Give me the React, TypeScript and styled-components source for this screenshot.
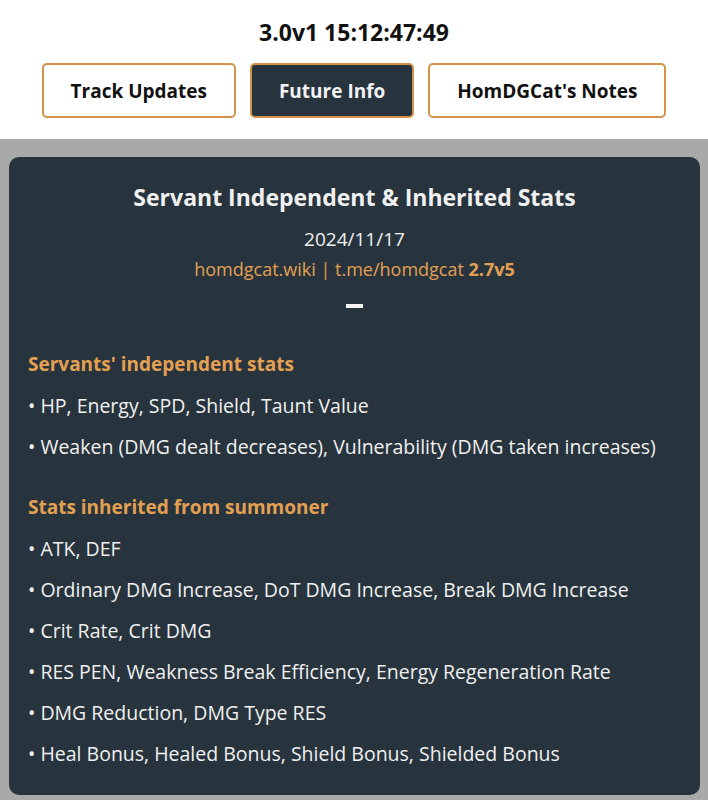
import { createGlobalStyle, styled } from 'styled-components';

const GlobalStyle = createGlobalStyle`
  html, body {
    margin: 0;
    padding: 0;
    background: #ffffff;
    font-family: "Open Sans", "Noto Sans", sans-serif;
  }
`

const Header = styled.header`
  background: #ffffff;
  padding: 16px 0 21px;
  display: flex;
  flex-direction: column;
  align-items: center;
`

const Clock = styled.h1`
  margin: 0;
  font-size: 23px;
  line-height: 32px;
  font-weight: 700;
  color: #111;
`

const Nav = styled.nav`
  margin-top: 15px;
  display: flex;
  gap: 14px;
`

const NavButton = styled.button<{ $active?: boolean }>`
  height: 55px;
  padding: 0 27px;
  border: 2px solid #d4934a;
  border-radius: 5px;
  background: ${p => (p.$active ? '#28343d' : '#ffffff')};
  color: ${p => (p.$active ? '#f2f2f2' : '#111')};
  font-family: inherit;
  font-size: 19px;
  font-weight: 700;
  cursor: pointer;
`

const Main = styled.main`
  background: #a9a9a9;
  padding: 18px 8px 5px 9px;
`

const Card = styled.section`
  background: #28343d;
  border-radius: 10px;
  padding: 22px 19px 21px;
  color: #f0f0f0;
`

const CardHead = styled.div`
  display: flex;
  flex-direction: column;
  align-items: center;
`

const Title = styled.h2`
  margin: 0;
  font-size: 23px;
  line-height: 36px;
  font-weight: 700;
`

const DateLine = styled.div`
  margin-top: 9px;
  font-size: 19px;
  line-height: 30px;
`

const Links = styled.div`
  font-size: 18px;
  line-height: 30px;
  color: #e3a052;

  b {
    font-weight: 700;
  }
`

const Dash = styled.div`
  margin-top: 20px;
  width: 17px;
  height: 4px;
  background: #f4f4f4;
`

const Section = styled.div`
  margin-top: 42px;

  & + & {
    margin-top: 26px;
  }
`

const SectionTitle = styled.h3`
  margin: 0 0 7px;
  font-size: 19px;
  line-height: 28px;
  font-weight: 700;
  color: #e3a052;
`

const Item = styled.p`
  margin: 0;
  font-size: 19.5px;
  line-height: 41px;
`

const sections = [
  {
    title: "Servants' independent stats",
    items: [
      'HP, Energy, SPD, Shield, Taunt Value',
      'Weaken (DMG dealt decreases), Vulnerability (DMG taken increases)',
    ],
  },
  {
    title: 'Stats inherited from summoner',
    items: [
      'ATK, DEF',
      'Ordinary DMG Increase, DoT DMG Increase, Break DMG Increase',
      'Crit Rate, Crit DMG',
      'RES PEN, Weakness Break Efficiency, Energy Regeneration Rate',
      'DMG Reduction, DMG Type RES',
      'Heal Bonus, Healed Bonus, Shield Bonus, Shielded Bonus',
    ],
  },
]

function App() {
  return (
    <>
      <GlobalStyle />
      <Header>
        <Clock>3.0v1 15:12:47:49</Clock>
        <Nav>
          <NavButton>Track Updates</NavButton>
          <NavButton $active>Future Info</NavButton>
          <NavButton>HomDGCat's Notes</NavButton>
        </Nav>
      </Header>
      <Main>
        <Card>
          <CardHead>
            <Title>Servant Independent &amp; Inherited Stats</Title>
            <DateLine>2024/11/17</DateLine>
            <Links>
              homdgcat.wiki | t.me/homdgcat <b>2.7v5</b>
            </Links>
            <Dash />
          </CardHead>
          {sections.map(s => (
            <Section key={s.title}>
              <SectionTitle>{s.title}</SectionTitle>
              {s.items.map(i => (
                <Item key={i}>• {i}</Item>
              ))}
            </Section>
          ))}
        </Card>
      </Main>
    </>
  )
}

export default App
